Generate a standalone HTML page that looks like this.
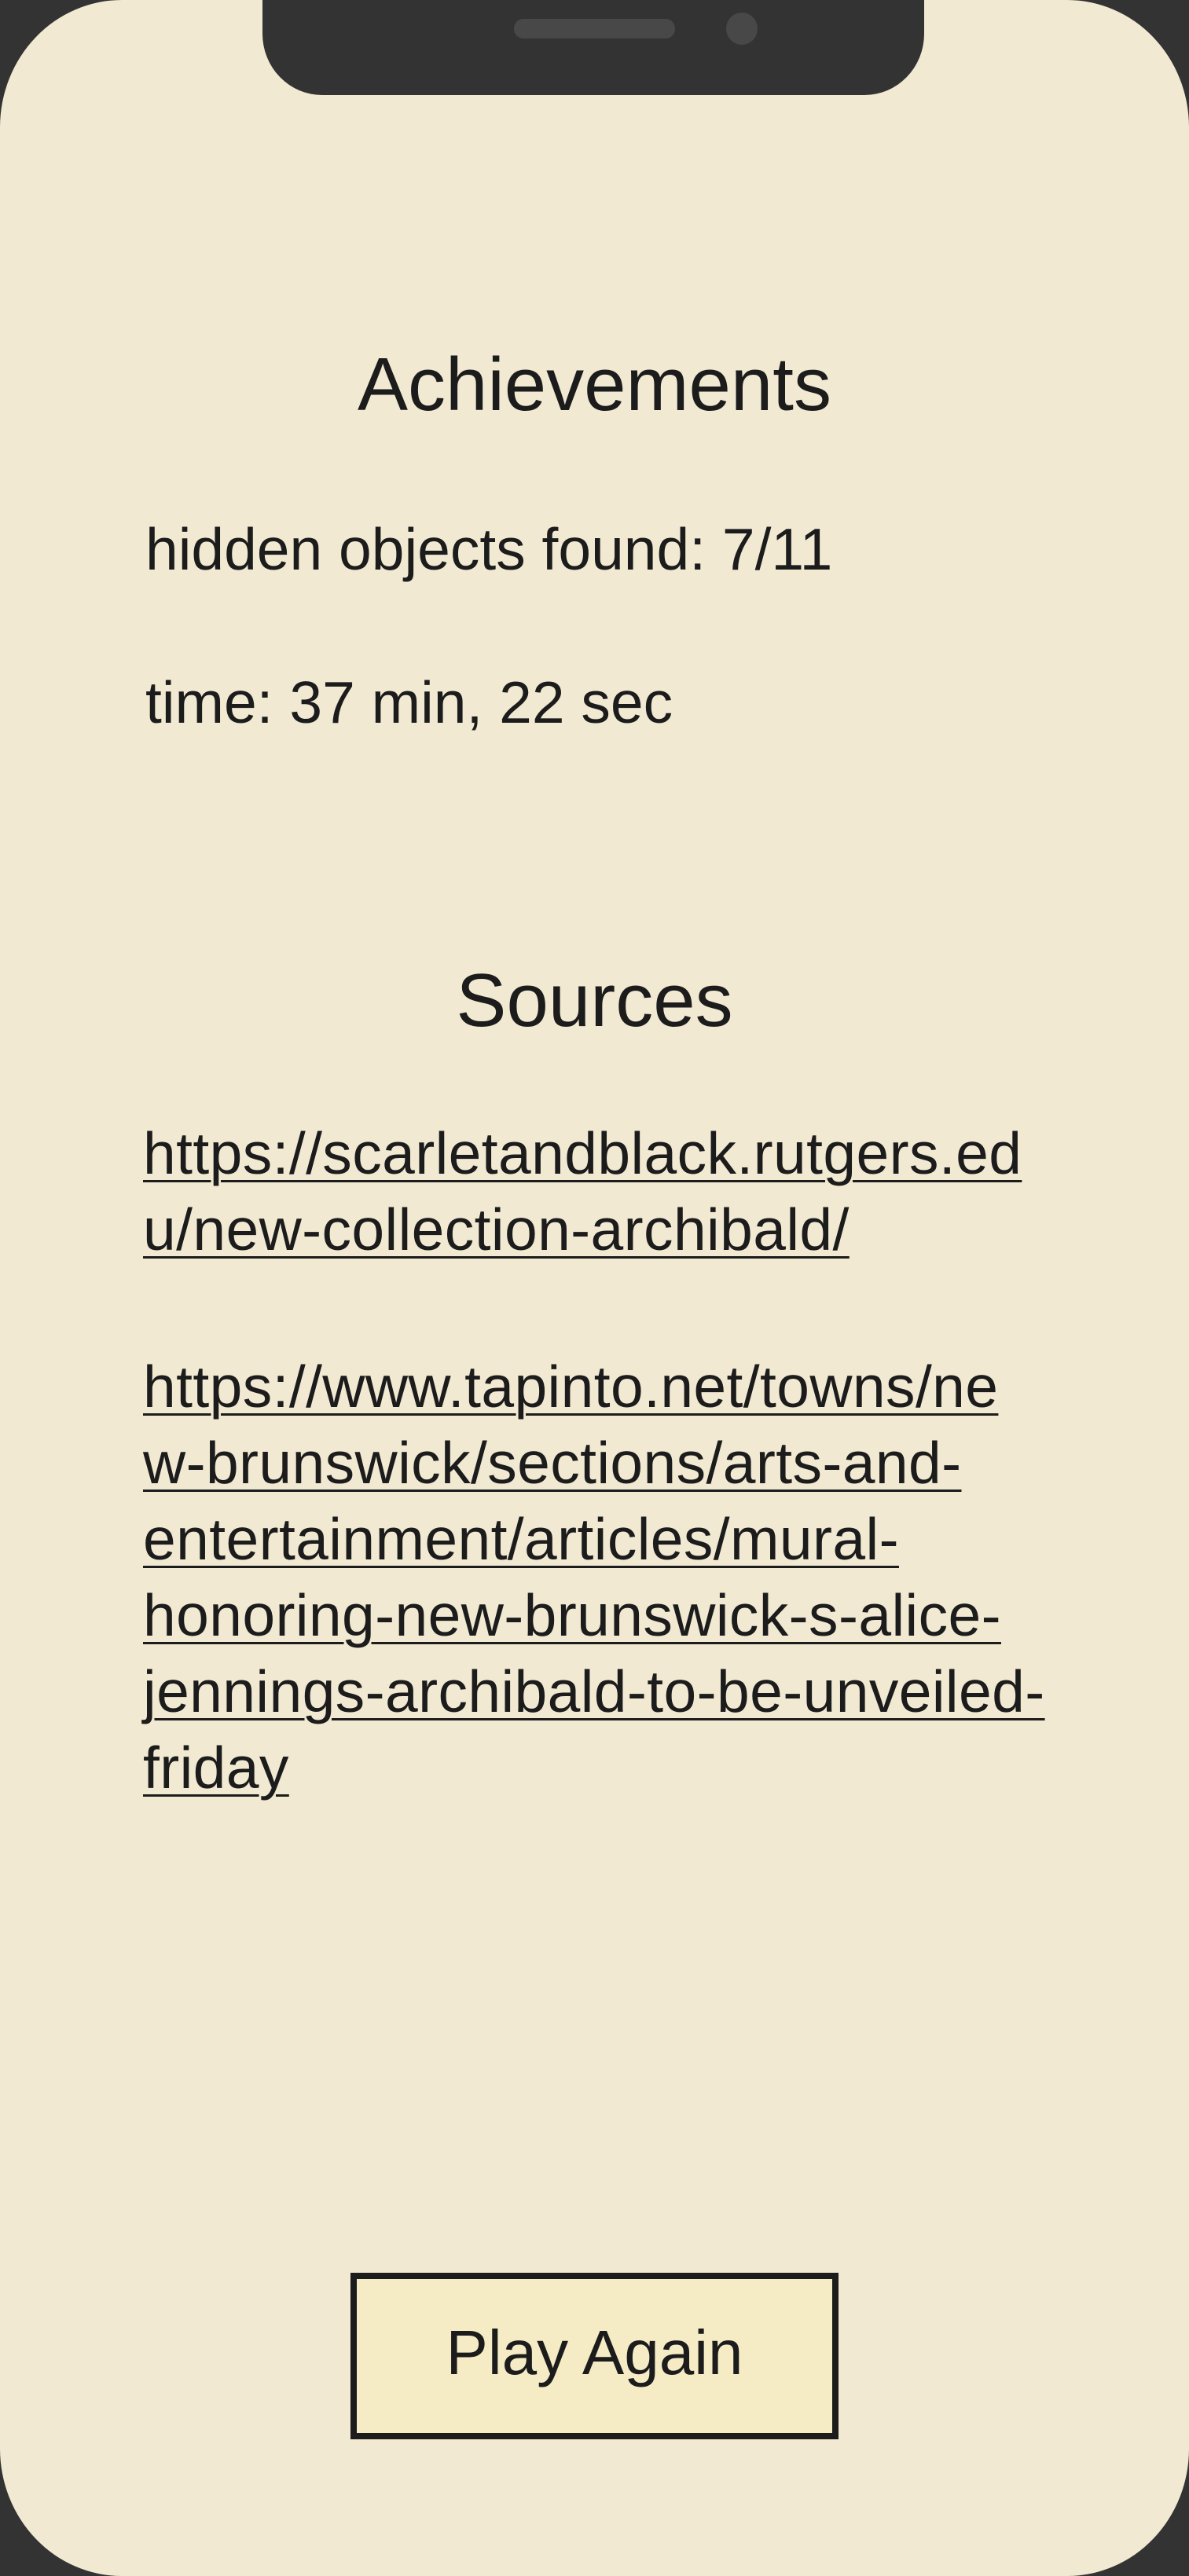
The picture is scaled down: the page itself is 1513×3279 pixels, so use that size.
<!DOCTYPE html>
<html><head><meta charset="utf-8"><style>
html,body{margin:0;padding:0}
body{width:1513px;height:3279px;background:#333333;position:relative;overflow:hidden;font-family:"Liberation Sans",sans-serif;color:#1c1c1c}
.screen{position:absolute;left:0;top:0;width:1513px;height:3279px;background:#f1e9d2;border-radius:155px/162px}
.notch{position:absolute;left:334px;top:0;width:842px;height:121px;background:#333333;border-radius:0 0 76px 76px/0 0 78px 78px}
.speaker{position:absolute;left:654px;top:24px;width:205px;height:25px;border-radius:12px;background:#484848}
.cam{position:absolute;left:924px;top:16px;width:40px;height:41px;border-radius:50%;background:#484848}
.t{position:absolute;line-height:1;white-space:nowrap}
.h{font-size:96px;left:0;width:1513px;text-align:center}
.p{font-size:75px;left:185px}
.links{position:absolute;left:182px;font-size:75px;line-height:97px;white-space:nowrap;letter-spacing:0.4px}
.links span{text-decoration:underline;text-decoration-thickness:3px;text-underline-offset:8px}
.btn{position:absolute;left:446px;top:2893px;width:605px;height:196px;border:8px solid #1c1c1c;background:#f5ebc5}
</style></head><body>
<div class="screen"></div>
<div class="notch"></div>
<div class="speaker"></div>
<div class="cam"></div>
<div class="t h" style="top:442px">Achievements</div>
<div class="t p" style="top:662px">hidden objects found: 7/11</div>
<div class="t p" style="top:857px">time: 37 min, 22 sec</div>
<div class="t h" style="top:1226px">Sources</div>
<div class="links" style="top:1420px"><span>https://scarletandblack.rutgers.ed</span><br><span>u/new-collection-archibald/</span></div>
<div class="links" style="top:1717px"><span>https://www.tapinto.net/towns/ne</span><br><span>w-brunswick/sections/arts-and-</span><br><span>entertainment/articles/mural-</span><br><span>honoring-new-brunswick-s-alice-</span><br><span>jennings-archibald-to-be-unveiled-</span><br><span>friday</span></div>
<div class="btn"></div>
<div class="t" style="font-size:80px;left:0;width:1513px;text-align:center;top:2955px">Play Again</div>
</body></html>
